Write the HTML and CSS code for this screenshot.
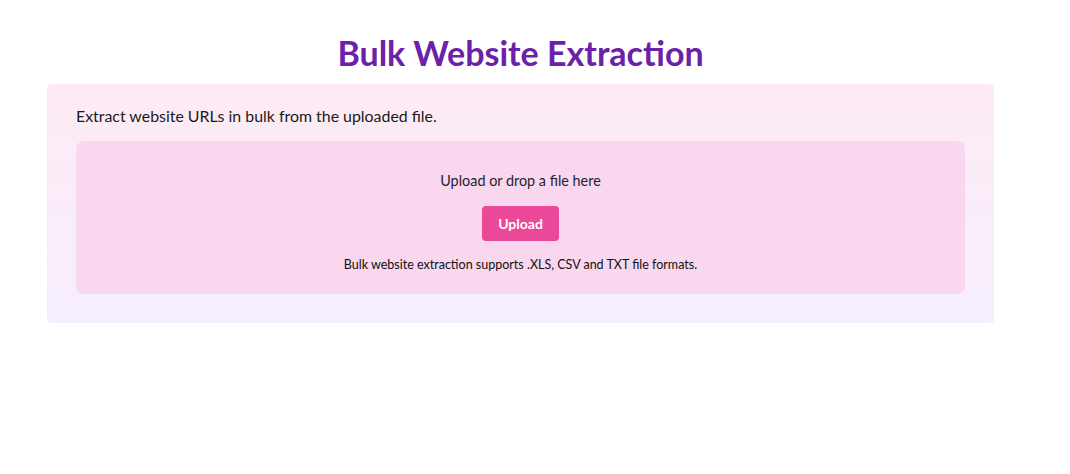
FILE: index.html
```html
<!DOCTYPE html>
<html lang="en">
<head>
<meta charset="utf-8">
<title>Bulk Website Extraction</title>
<link rel="stylesheet" href="styles.css">
</head>
<body>
<main class="page">
  <h1 class="title">Bulk Website Extraction</h1>
  <section class="card">
    <p class="intro">Extract website URLs in bulk from the uploaded file.</p>
    <div class="dropzone">
      <p class="drop-text">Upload or drop a file here</p>
      <button class="upload-btn" type="button">Upload</button>
      <p class="formats">Bulk website extraction supports .XLS, CSV and TXT file formats.</p>
    </div>
  </section>
</main>
</body>
</html>
```
FILE: styles.css
```css
* { box-sizing: border-box; }
body {
  margin: 0;
  background: #ffffff;
  font-family: Lato, "Segoe UI", "Liberation Sans", sans-serif;
  color: #1f1030;
}
.page {
  width: 947px;
  margin-left: 47px;
  padding-top: 31px;
}
.title {
  margin: 0 0 10px;
  text-align: center;
  font-size: 34px;
  line-height: 43px;
  font-weight: 700;
  color: #6b21a8;
}
.card {
  border-radius: 4px;
  background: linear-gradient(to bottom, #fdebf4, #f6eefd);
  padding: 21px 29px 29px;
}
.intro {
  margin: 0 0 14px;
  font-size: 15.9px;
  line-height: 22px;
  color: #1a1a1a;
}
.dropzone {
  border-radius: 8px;
  background: #f9d7ee;
  padding: 30px 20px 20px;
  display: flex;
  flex-direction: column;
  align-items: center;
}
.drop-text {
  margin: 0 0 15px;
  font-size: 14.4px;
  line-height: 20px;
  color: #1f1f2e;
}
.upload-btn {
  border: none;
  border-radius: 4px;
  background: #ec4899;
  color: #ffffff;
  font-family: inherit;
  font-size: 14px;
  font-weight: 700;
  width: 77px;
  height: 35px;
  padding: 0;
  cursor: pointer;
}
.formats {
  margin: 15px 0 0;
  font-size: 12.5px;
  line-height: 18px;
  color: #111111;
}
```
